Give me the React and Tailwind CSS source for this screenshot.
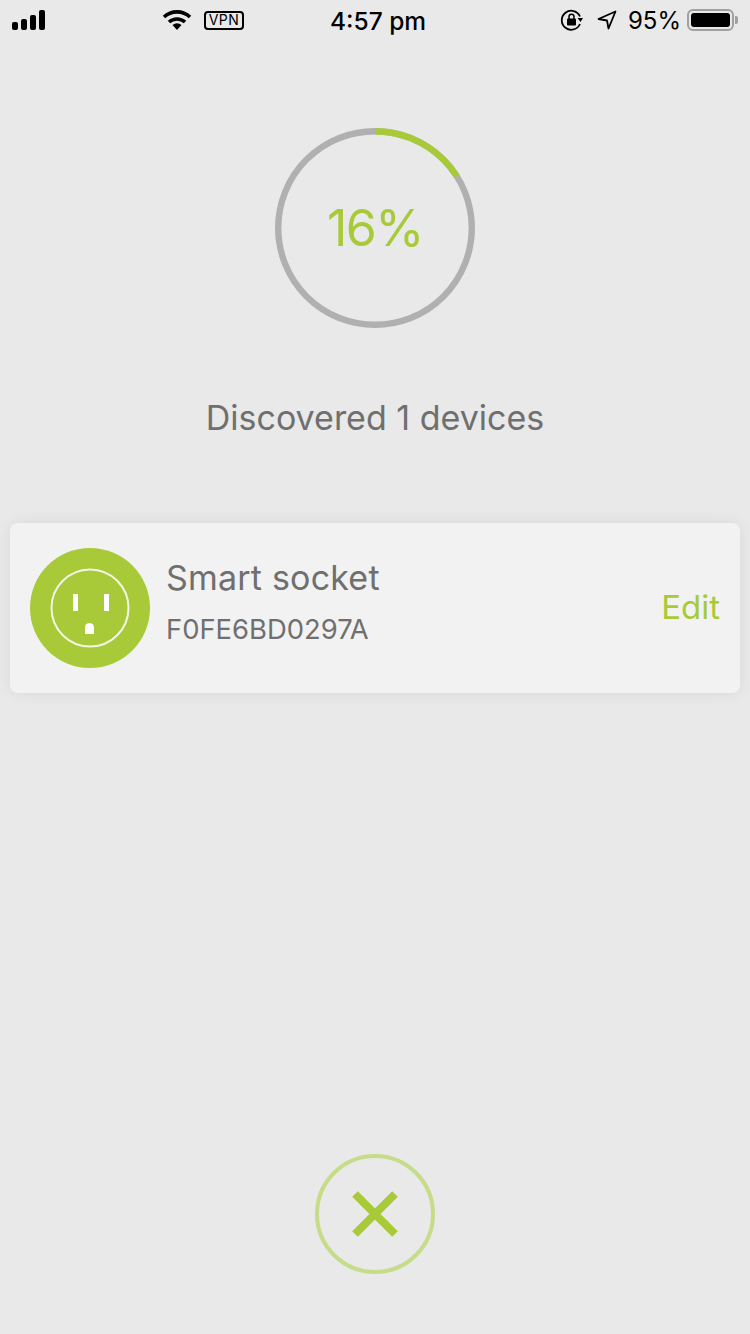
import React from "react";

const GREEN = "#a8ca38";

// status bar ---------------------------------------------------------------------------------------------------
const SignalBars = () => (
  <div className="flex items-end gap-[3px] w-[33px] h-[20px]">
    <div className="w-[6px] h-[8px] rounded-[2px] bg-black" />
    <div className="w-[6px] h-[11px] rounded-[2px] bg-black" />
    <div className="w-[6px] h-[15px] rounded-[2px] bg-black" />
    <div className="w-[6px] h-[20px] rounded-[2px] bg-black" />
  </div>
);

const WifiIcon = () => (
  <svg width="30" height="22" viewBox="0 0 30 22">
    <path d="M2 8 A19 19 0 0 1 28 8" fill="none" stroke="#000" strokeWidth="3.6" />
    <path d="M7 13 A12 12 0 0 1 23 13" fill="none" stroke="#000" strokeWidth="3.6" />
    <path d="M10.5 16 A7 7 0 0 1 19.5 16 L15 21 Z" fill="#000" />
  </svg>
);

const RotationLockIcon = () => (
  <svg width="24" height="24" viewBox="0 0 24 24">
    <path d="M20 8.5 A9.5 9.5 0 1 0 20 16" fill="none" stroke="#000" strokeWidth="1.8" />
    <path d="M17.5 10 L23 10 L20.5 14 Z" fill="#000" />
    <rect x="7" y="10.5" width="9" height="7" rx="1" fill="#000" />
    <path d="M9 11 V8.8 A2.5 2.5 0 0 1 14 8.8 V11" fill="none" stroke="#000" strokeWidth="1.5" />
  </svg>
);

const LocationIcon = () => (
  <svg width="20" height="20" viewBox="0 0 20 20">
    <path d="M18.5 1.5 L1.5 9 L10 10.5 L11.5 18.5 Z" fill="none" stroke="#000" strokeWidth="1.8" strokeLinejoin="round" />
  </svg>
);

const Battery = () => (
  <div className="flex items-center">
    <div className="w-[47px] h-[22px] rounded-[6px] border-2 border-[#a0a0a0] p-[2px]">
      <div className="w-full h-full rounded-[3px] bg-black" />
    </div>
    <div className="w-[3px] h-[8px] ml-[1px] rounded-r-[2px] bg-[#a0a0a0]" />
  </div>
);

const StatusBar = () => (
  <div className="flex items-center h-[40px] pl-[12px] pr-[12px] text-black">
    <SignalBars />
    <div className="ml-[117px]">
      <WifiIcon />
    </div>
    <div className="ml-[12px] w-[40px] h-[19px] flex items-center justify-center rounded-[4px] border-2 border-black text-[14px] leading-none tracking-[0.5px]">
      VPN
    </div>
    <div className="ml-[86px] mt-[2px] whitespace-nowrap text-[24.5px] leading-none font-medium">4:57 pm</div>
    <div className="ml-auto flex items-center">
      <RotationLockIcon />
      <div className="ml-[13px]">
        <LocationIcon />
      </div>
      <div className="ml-[11px] mt-[2px] text-[24px] leading-none">95%</div>
      <div className="ml-[6px]">
        <Battery />
      </div>
    </div>
  </div>
);

// progress ring ------------------------------------------------------------------------------------------------
const ProgressRing = ({ percent }) => {
  const radius = 96.8;
  const circumference = 2 * Math.PI * radius;
  return (
    <div className="relative w-[200px] h-[200px]">
      <svg width="200" height="200" viewBox="0 0 200 200" className="-rotate-90">
        <circle cx="100" cy="100" r={radius} fill="none" stroke="#b0b0b0" strokeWidth="6.4" />
        <circle
          cx="100"
          cy="100"
          r={radius}
          fill="none"
          stroke={GREEN}
          strokeWidth="6.4"
          strokeDasharray={`${(circumference * percent) / 100} ${circumference}`}
        />
      </svg>
      <div className="absolute inset-0 flex items-center justify-center text-[50px] font-normal text-[#a8ca38] tracking-[-1.5px]">
        {percent}%
      </div>
    </div>
  );
};

// device row ---------------------------------------------------------------------------------------------------
const SocketIcon = () => (
  <svg width="120" height="120" viewBox="0 0 120 120" className="shrink-0">
    <circle cx="60" cy="60" r="60" fill={GREEN} />
    <circle cx="60" cy="60" r="38.5" fill="none" stroke="#f4f6e6" strokeWidth="2" />
    <rect x="43" y="46" width="5" height="17" fill="#fff" />
    <rect x="74" y="46" width="5" height="17" fill="#fff" />
    <path d="M55 86 V79.5 A4.5 4.5 0 0 1 64 79.5 V86 Z" fill="#fff" />
  </svg>
);

const DeviceCard = ({ name, mac }) => (
  <div className="mx-[10px] h-[170px] flex items-center pl-[20px] pr-[20px] rounded-[8px] bg-[#f2f2f2] shadow-[0_0_16px_rgba(0,0,0,0.07)]">
    <SocketIcon />
    <div className="ml-[16px] mb-[14px] flex-1 text-[#6f6f6f]">
      <div className="text-[34px] leading-[40px] tracking-[0.2px]">{name}</div>
      <div className="mt-[15px] text-[27.4px] leading-[32px]">{mac}</div>
    </div>
    <div className="text-[33px] text-[#a8ca38]">Edit</div>
  </div>
);

// close button -------------------------------------------------------------------------------------------------
const CloseButton = () => (
  <div className="w-[120px] h-[120px] rounded-full border-[4px] border-[#c6dc88] flex items-center justify-center">
    <svg width="48" height="48" viewBox="0 0 48 48">
      <path d="M4 4 L44 44 M44 4 L4 44" stroke={GREEN} strokeWidth="8" fill="none" />
    </svg>
  </div>
);

export default function App() {
  return (
    <div
      className="w-[750px] h-[1334px] overflow-hidden flex flex-col bg-[#e9e9e9]"
      style={{ fontFamily: "Inter, 'Noto Sans', sans-serif" }}
    >
      <StatusBar />
      <div className="mt-[88px] flex justify-center">
        <ProgressRing percent={16} />
      </div>
      <div className="mt-[68px] text-center text-[34px] leading-[44px] text-[#6f6f6f]">
        Discovered 1 devices
      </div>
      <div className="mt-[83px]">
        <DeviceCard name="Smart socket" mac="F0FE6BD0297A" />
      </div>
      <div className="mt-[461px] flex justify-center">
        <CloseButton />
      </div>
    </div>
  );
}
